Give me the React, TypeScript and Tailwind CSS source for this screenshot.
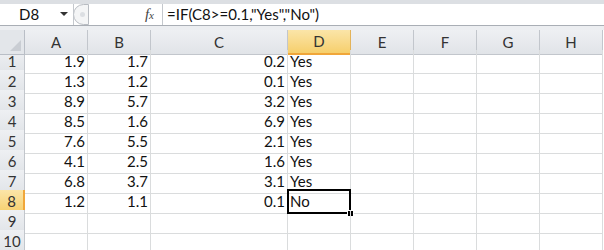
import React from 'react';

const cols = ['A', 'B', 'C', 'D', 'E', 'F', 'G', 'H'];

const rows: [string, string, string, string][] = [
    ['1.9', '1.7', '0.2', 'Yes'],
    ['1.3', '1.2', '0.1', 'Yes'],
    ['8.9', '5.7', '3.2', 'Yes'],
    ['8.5', '1.6', '6.9', 'Yes'],
    ['7.6', '5.5', '2.1', 'Yes'],
    ['4.1', '2.5', '1.6', 'Yes'],
    ['6.8', '3.7', '3.1', 'Yes'],
    ['1.2', '1.1', '0.1', 'No'],
    ['', '', '', ''],
    ['', '', '', ''],
];

const gridCols = 'grid grid-cols-[25px_63px_63px_137px_63px_63px_63px_63px_63px]';

export default function App() {
    return (
        <div
            className="w-[604px] h-[250px] overflow-hidden bg-white text-[15px] text-[#111]"
            style={{ fontFamily: 'Lato, "Liberation Sans", sans-serif' }}
        >
            {/* formula bar */}
            <div className="h-[25px] bg-[#dcdfe3] pt-[4px] flex">
                <div className="w-[74px] h-[21px] bg-white border-r border-[#c4c8cd] flex items-center relative">
                    <span className="pl-[19px]">D8</span>
                    <span className="absolute left-[60px] top-[8px] w-0 h-0 border-l-[4px] border-r-[4px] border-t-[4px] border-l-transparent border-r-transparent border-t-[#333]" />
                </div>
                <div className="flex-1 h-[21px] bg-white flex items-center">
                    <div className="w-[16px] h-[21px] rounded-l-full border border-[#b8bcc2] bg-[#f4f5f6] flex items-center justify-center -ml-[1px]">
                        <div className="w-[5px] h-[5px] rounded-full bg-[#dcdfe3] ml-[3px]" />
                    </div>
                    <div className="w-[74px] h-full bg-white flex items-center justify-end pr-[8px] border-r border-[#c4c8cd]">
                        <span className="italic text-[15px] text-[#444]" style={{ fontFamily: '"Liberation Serif", serif' }}>
                            f<span className="text-[11px]">x</span>
                        </span>
                    </div>
                    <span className="pl-[4px] whitespace-nowrap">=IF(C8&gt;=0.1,"Yes","No")</span>
                </div>
            </div>
            <div className="h-[5px] bg-[#eceef1] border-t border-[#a9aeb5]" />

            {/* column headers */}
            <div className={`${gridCols} h-[20px]`}>
                <div className="bg-[#e3e6ea] border-r border-b border-[#b9bec6] relative">
                    <svg className="absolute right-[3px] bottom-[3px]" width="11" height="11" viewBox="0 0 11 11">
                        <polygon points="11,0 11,11 0,11" fill="#c9cdd3" />
                    </svg>
                </div>
                {cols.map(c =>
                    c === 'D' ? (
                        <div key={c} className="bg-gradient-to-b from-[#fbe5a8] to-[#f6cf6b] border-r border-b-2 border-r-[#e3b35a] border-b-[#f0a63a] flex items-center justify-center text-[#333]">
                            {c}
                        </div>
                    ) : (
                        <div key={c} className="bg-gradient-to-b from-[#eef0f3] to-[#e1e4e8] border-r border-b border-[#c2c6cc] flex items-center justify-center text-[#333]">
                            {c}
                        </div>
                    )
                )}
            </div>

            {/* rows */}
            {rows.map((r, i) => (
                <div key={i} className={`${gridCols} h-[20px]`}>
                    {i === 7 ? (
                        <div className="bg-gradient-to-b from-[#fbe5a8] to-[#f6cf6b] border-r-2 border-b border-r-[#f0a63a] border-b-[#e3b35a] flex items-center justify-center text-[#333]">
                            {i + 1}
                        </div>
                    ) : (
                        <div className="bg-gradient-to-b from-[#eef0f3] to-[#e1e4e8] border-r border-b border-[#c2c6cc] flex items-center justify-center text-[#333]">
                            {i + 1}
                        </div>
                    )}
                    <div className="border-r border-b border-[#dadcdd] flex items-center justify-end pr-[2px]">{r[0]}</div>
                    <div className="border-r border-b border-[#dadcdd] flex items-center justify-end pr-[2px]">{r[1]}</div>
                    <div className="border-r border-b border-[#dadcdd] flex items-center justify-end pr-[2px]">{r[2]}</div>
                    <div className="border-r border-b border-[#dadcdd] flex items-center pl-[2px] relative">
                        {r[3]}
                        {i === 7 && (
                            <>
                                <div className="absolute -left-[1px] -top-[1px] -right-[1px] -bottom-[1px] border-2 border-black" />
                                <div className="absolute -right-[4px] -bottom-[4px] w-[7px] h-[7px] bg-black border border-white" />
                            </>
                        )}
                    </div>
                    <div className="border-r border-b border-[#dadcdd]" />
                    <div className="border-r border-b border-[#dadcdd]" />
                    <div className="border-r border-b border-[#dadcdd]" />
                    <div className="border-r border-b border-[#dadcdd]" />
                </div>
            ))}
        </div>
    );
}
